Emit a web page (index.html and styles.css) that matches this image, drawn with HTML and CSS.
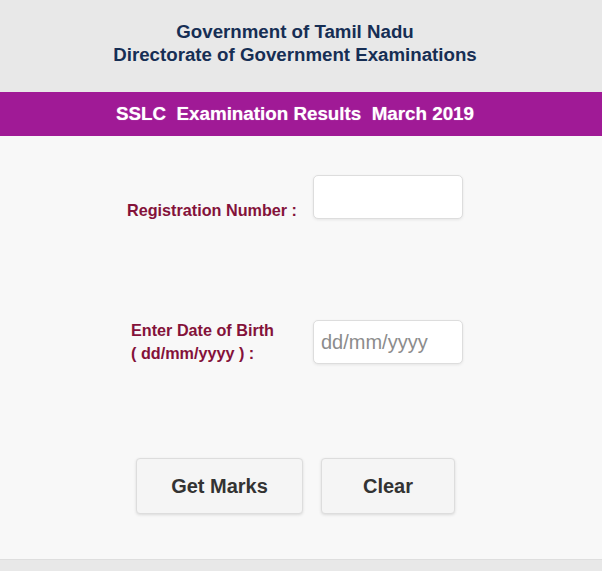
FILE: index.html
```html
<!DOCTYPE html>
<html lang="en">
<head>
    <meta charset="utf-8"/>
    <title>SSLC Examination Results March 2019</title>
    <link rel="stylesheet" href="styles.css">
</head>
<body>
    <div class="header">
        <p>Government of Tamil Nadu</p>
        <p>Directorate of Government Examinations</p>
    </div>
    <div class="titlebar">SSLC&nbsp; Examination Results&nbsp; March 2019</div>
    <form class="result-form">
        <div class="row row-reg">
            <label class="label label-reg" for="regno">Registration Number :</label>
            <input class="field" type="text" id="regno">
        </div>
        <div class="row row-dob">
            <label class="label label-dob" for="dob">Enter Date of Birth<br>( dd/mm/yyyy ) :</label>
            <input class="field" type="text" id="dob" placeholder="dd/mm/yyyy">
        </div>
        <div class="buttons">
            <button type="button" class="btn btn-get">Get Marks</button>
            <button type="reset" class="btn btn-clear">Clear</button>
        </div>
    </form>
    <div class="footer"></div>
</body>
</html>
```

FILE: styles.css
```css
* {
    font-family: "Liberation Sans", Arial, sans-serif;
    box-sizing: border-box;
}
body {
    margin: 0;
    background-color: rgb(248,248,248);
}
.header {
    background-color: rgb(232,232,232);
    height: 92px;
    padding: 20px 12px 0 0;
    text-align: center;
}
.header p {
    margin: 0;
    font-size: 18.7px;
    font-weight: bold;
    line-height: 23px;
    color: rgb(22,46,84);
}
.titlebar {
    background-color: rgb(160,26,150);
    height: 44px;
    line-height: 44px;
    padding-right: 12px;
    text-align: center;
    color: #fff;
    font-size: 18.8px;
    font-weight: bold;
    text-shadow: 0 0 1px rgba(255,255,255,0.6);
}
.result-form {
    height: 423px;
    padding-top: 39px;
}
.row {
    display: flex;
    align-items: center;
    gap: 16px;
}
.row-reg {
    align-items: flex-end;
}
.row-dob {
    margin-top: 100px;
}
.label {
    width: 170px;
    margin-left: 127px;
    font-size: 16.2px;
    font-weight: bold;
    color: rgb(132,18,58);
    line-height: 23px;
}
.label-reg {
    line-height: 18px;
}
.label-dob {
    padding-left: 4px;
}
.field {
    width: 150px;
    height: 44px;
    border: 1px solid rgb(221,221,221);
    border-radius: 5px;
    background-color: #fff;
    box-shadow: 0 1px 3px rgba(0,0,0,0.08);
    font-size: 20px;
    padding: 0 7px;
    color: #555;
}
.field::placeholder {
    color: rgb(140,140,140);
}
.buttons {
    display: flex;
    gap: 18px;
    margin-top: 93px;
    margin-left: 136px;
}
.btn {
    height: 56px;
    border: 1px solid rgb(221,221,221);
    border-radius: 4px;
    background-color: rgb(245,245,245);
    box-shadow: 0 1px 3px rgba(0,0,0,0.12);
    font-size: 20px;
    font-weight: bold;
    color: rgb(51,51,51);
}
.btn-get {
    width: 167px;
}
.btn-clear {
    width: 134px;
}
.footer {
    height: 12px;
    background-color: rgb(232,232,232);
    border-top: 1px solid rgb(222,222,222);
}
```
